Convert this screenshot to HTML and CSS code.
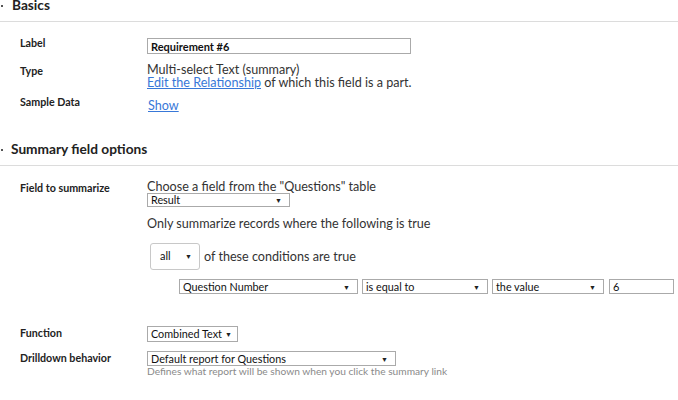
FILE: index.html
```html
<!DOCTYPE html>
<html lang="en">
<head>
    <meta charset="UTF-8">
    <meta name="viewport" content="width=device-width, initial-scale=1.0">
    <title>Field Properties</title>
    <link rel="stylesheet" href="styles.css">
</head>
<body>
    <div class="page">
        <div class="section-head"><span class="bullet"></span>Basics</div>
        <div class="fields basics">
            <div class="row row-label">
                <div class="lbl">Label</div>
                <div class="val"><input class="text-input label-input" type="text" value="Requirement #6"></div>
            </div>
            <div class="row row-type">
                <div class="lbl">Type</div>
                <div class="val lines">
                    <div>Multi-select Text (summary)</div>
                    <div><a href="#">Edit the Relationship</a> of which this field is a part.</div>
                </div>
            </div>
            <div class="row row-sample">
                <div class="lbl">Sample Data</div>
                <div class="val"><a href="#" class="show-link">Show</a></div>
            </div>
        </div>

        <div class="section-head second"><span class="bullet"></span>Summary field options</div>
        <div class="fields summary">
            <div class="row row-summarize">
                <div class="lbl">Field to summarize</div>
                <div class="val">
                    <div class="hint">Choose a field from the "Questions" table</div>
                    <div class="select sel-result"><span>Result</span><span class="arrow">&#9660;</span></div>
                    <div class="only">Only summarize records where the following is true</div>
                    <div class="match">
                        <div class="all-box"><span>all</span><span class="arrow">&#9660;</span></div>
                        <span>of these conditions are true</span>
                    </div>
                    <div class="condition">
                        <div class="select sel-field"><span>Question Number</span><span class="arrow">&#9660;</span></div>
                        <div class="select sel-op"><span>is equal to</span><span class="arrow">&#9660;</span></div>
                        <div class="select sel-kind"><span>the value</span><span class="arrow">&#9660;</span></div>
                        <input class="text-input value-input" type="text" value="6">
                    </div>
                </div>
            </div>
            <div class="row row-function">
                <div class="lbl">Function</div>
                <div class="val"><div class="select sel-func"><span>Combined Text</span><span class="arrow">&#9660;</span></div></div>
            </div>
            <div class="row row-drill">
                <div class="lbl">Drilldown behavior</div>
                <div class="val">
                    <div class="select sel-drill"><span>Default report for Questions</span><span class="arrow">&#9660;</span></div>
                    <div class="help">Defines what report will be shown when you click the summary link</div>
                </div>
            </div>
        </div>
    </div>
</body>
</html>
```

FILE: styles.css
```css
body {
    margin: 0;
    font-family: Lato, "Open Sans", sans-serif;
    font-size: 12.6px;
    color: #333;
    background: #fff;
}
.page {
    margin-top: -5px;
}
.section-head {
    position: relative;
    line-height: 20px;
    padding: 0 0 6px 12px;
    font-size: 13.7px;
    font-weight: bold;
    color: #222;
    border-bottom: 1px solid #dcdcdc;
}
.section-head.second {
    margin-top: 26px;
    padding-left: 11px;
}
.bullet {
    position: absolute;
    left: 1px;
    top: 10px;
    width: 2px;
    height: 2px;
    background: #555;
}
.fields {
    padding-left: 20px;
}
.basics {
    margin-top: 16px;
}
.summary {
    margin-top: 15px;
}
.row {
    display: grid;
    grid-template-columns: 127px 1fr;
    align-items: start;
}
.lbl {
    font-size: 10.7px;
    font-weight: bold;
    color: #222;
    line-height: 14px;
    white-space: nowrap;
}
.row-label .lbl {
    margin-top: -2px;
}
.row-type {
    margin-top: 9px;
}
.row-type .lbl {
    margin-top: 1px;
}
.lines {
    line-height: 13px;
}
.row-sample {
    margin-top: 6px;
}
a {
    color: #3878d8;
}
.show-link {
    display: inline-block;
    margin: 4px 0 0 1px;
    line-height: 14px;
}
.text-input {
    box-sizing: border-box;
    border: 1px solid #aaa;
    font-family: inherit;
    font-size: 11px;
    color: #111;
    padding: 0 3px;
    margin: 0;
    outline: none;
}
.label-input {
    width: 264px;
    height: 16px;
    display: block;
    font-weight: bold;
}
.hint {
    line-height: 12px;
}
.select {
    box-sizing: border-box;
    display: flex;
    align-items: center;
    justify-content: space-between;
    border: 1px solid #aaa;
    background: #fff;
    font-size: 10.8px;
    color: #111;
    padding: 0 7px 0 3px;
    line-height: 12px;
    white-space: nowrap;
}
.arrow {
    font-size: 7px;
    color: #222;
}
.sel-result {
    width: 143px;
    height: 14px;
}
.only {
    margin-top: 10px;
    line-height: 14px;
}
.match {
    display: flex;
    align-items: center;
    gap: 4px;
    margin: 12px 0 0 3px;
}
.all-box {
    box-sizing: border-box;
    display: flex;
    align-items: center;
    justify-content: space-between;
    width: 50px;
    height: 27px;
    border: 1px solid #c8c8c8;
    border-radius: 3px;
    padding: 0 7px 2px 9px;
    font-size: 11px;
    color: #111;
}
.condition {
    display: flex;
    margin: 9px 0 0 32px;
    gap: 4px;
}
.condition .select,
.value-input {
    height: 15px;
}
.sel-field {
    width: 179px;
}
.sel-op {
    width: 126px;
}
.sel-kind {
    width: 112px;
}
.value-input {
    width: 65px;
    margin-left: 1px;
}
.row-function {
    margin-top: 32px;
}
.sel-func {
    width: 91px;
    height: 16px;
    padding-right: 5px;
}
.row-drill {
    margin-top: 9px;
}
.sel-drill {
    width: 249px;
    height: 15px;
}
.help {
    font-size: 10.2px;
    color: #8a8a8a;
    line-height: 11px;
}
```
